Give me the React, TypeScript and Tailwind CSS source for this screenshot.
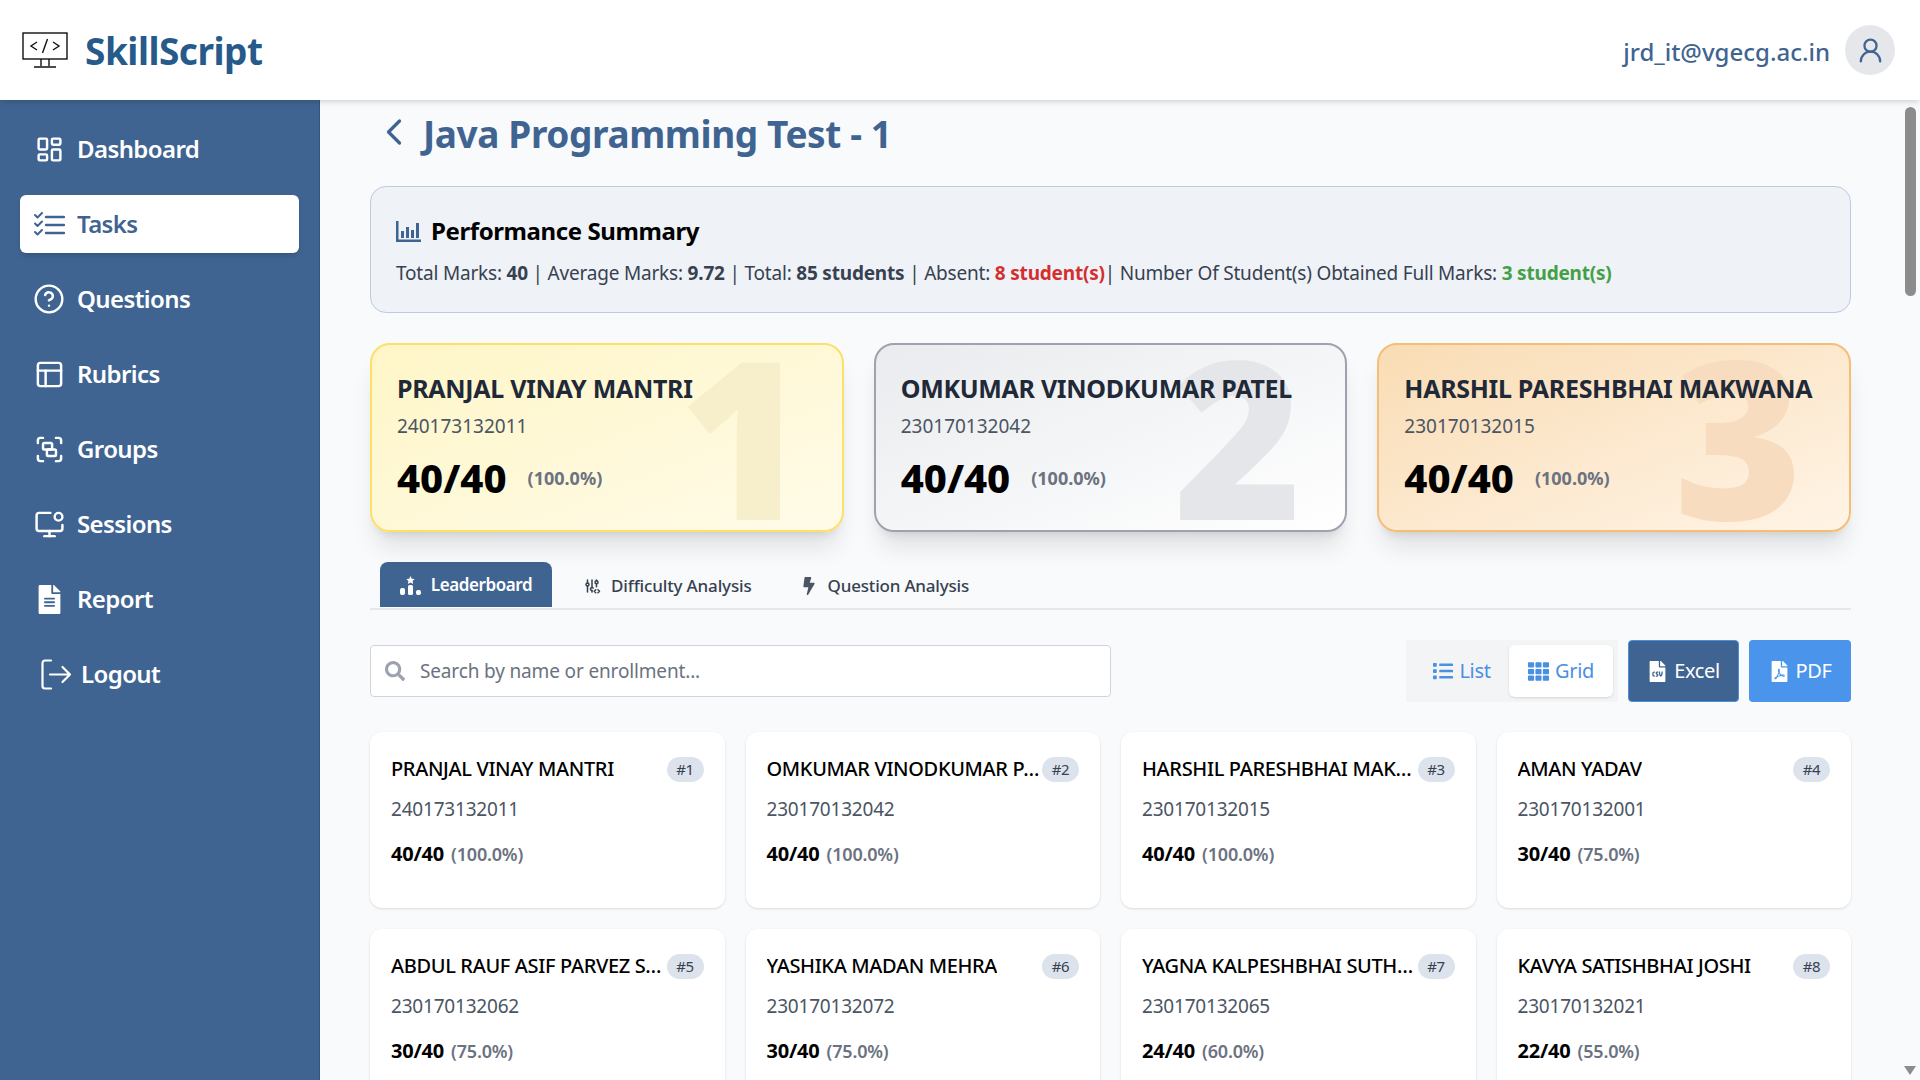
import {
  ChevronLeft,
  CircleHelp,
  Group,
  LayoutDashboard,
  MonitorDot,
  PanelsTopLeft,
  UserRound,
} from 'lucide-react';
import { FaBolt, FaFileAlt, FaFileCsv, FaFilePdf, FaList, FaSearch, FaTh } from 'react-icons/fa';
import { TbAdjustmentsCode } from 'react-icons/tb';

const font = { fontFamily: '"Noto Sans", "Open Sans", sans-serif' };

function LogoIcon() {
  return (
    <svg width="46" height="37" viewBox="0 0 46 37" fill="none" stroke="#111" strokeWidth="1.2">
      <rect x="1" y="1" width="44" height="26" fill="#fff" strokeWidth="1.4" />
      <path d="M15 10l-6 4 6 4M31 10l6 4-6 4M25.5 7l-5 14" strokeWidth="1.4" />
      <path d="M19 27v7M27 27v7M12 35h22" strokeWidth="1.4" />
    </svg>
  );
}

function TasksIcon() {
  return (
    <svg width="31" height="24" viewBox="0 0 31 24" fill="none" stroke="#406491" strokeLinecap="round" strokeLinejoin="round">
      <path d="M1 3l2.500 2.500L8 1M1 11.500L3.500 14 8 9.500M1 20l2.500 2.500L8 18" strokeWidth="2" />
      <path d="M12 5h18M12 13h18M12 21h18" strokeWidth="2.400" />
    </svg>
  );
}

function LogoutIcon() {
  return (
    <svg width="32" height="31" viewBox="0 0 32 31" fill="none" stroke="#fff" strokeWidth="2.200" strokeLinecap="round" strokeLinejoin="round">
      <path d="M11 1.500H5a2.500 2.500 0 0 0-2.500 2.500v23A2.500 2.500 0 0 0 5 29.500h6" />
      <path d="M10 15.500h20M22.500 8l7.500 7.500-7.500 7.500" />
    </svg>
  );
}

function ChartIcon() {
  return (
    <svg width="25" height="21" viewBox="0 0 25 21" fill="#406491">
      <path d="M0 0h2.500v18.500H25V21H0z" />
      <path d="M5 10h3v7H5zM10 6h3v11h-3zM15 9h3v8h-3zM20 2h3v15h-3z" />
    </svg>
  );
}

function LeaderboardIcon() {
  return (
    <svg width="21" height="19" viewBox="0 0 21 19" fill="#fff">
      <path d="M10.500 0l1.300 2.700 2.900.4-2.100 2 .5 2.900-2.600-1.400L7.900 8l.5-2.900-2.100-2 2.900-.4z" />
      <rect x="8" y="9" width="5" height="10" rx="1.500" />
      <rect x="0" y="12" width="5" height="7" rx="2" />
      <rect x="16" y="14" width="5" height="5" rx="2" />
    </svg>
  );
}

const navItems = [
  { label: 'Dashboard', icon: <LayoutDashboard size={29} strokeWidth={2} /> },
  { label: 'Tasks', icon: <TasksIcon />, active: true },
  { label: 'Questions', icon: <CircleHelp size={34} strokeWidth={1.8} /> },
  { label: 'Rubrics', icon: <PanelsTopLeft size={31} strokeWidth={1.900} /> },
  { label: 'Groups', icon: <Group size={31} strokeWidth={1.900} /> },
  { label: 'Sessions', icon: <MonitorDot size={31} strokeWidth={1.900} /> },
  { label: 'Report', icon: <FaFileAlt size={29} /> },
];

const topThree = [
  {
    rank: 1,
    name: 'PRANJAL VINAY MANTRI',
    id: '240173132011',
    tone: 'border-[#fde068] from-[#fef6c7] to-[#fffbe8]',
    digit: 'text-[#f7eecb] right-[34px]',
  },
  {
    rank: 2,
    name: 'OMKUMAR VINODKUMAR PATEL',
    id: '230170132042',
    tone: 'border-[#9ca3af] from-[#e9ebee] to-[#ffffff]',
    digit: 'text-[#e4e6e9] right-[43px]',
  },
  {
    rank: 3,
    name: 'HARSHIL PARESHBHAI MAKWANA',
    id: '230170132015',
    tone: 'border-[#f6bd78] from-[#f9dcb4] to-[#fff4e6]',
    digit: 'text-[#f7dcc0] right-[46px]',
  },
];

const students = [
  { rank: 1, name: 'PRANJAL VINAY MANTRI', id: '240173132011', marks: '40/40', pct: '(100.0%)' },
  { rank: 2, name: 'OMKUMAR VINODKUMAR PATEL', id: '230170132042', marks: '40/40', pct: '(100.0%)' },
  { rank: 3, name: 'HARSHIL PARESHBHAI MAKWANA', id: '230170132015', marks: '40/40', pct: '(100.0%)' },
  { rank: 4, name: 'AMAN YADAV', id: '230170132001', marks: '30/40', pct: '(75.0%)' },
  { rank: 5, name: 'ABDUL RAUF ASIF PARVEZ SHAIKH', id: '230170132062', marks: '30/40', pct: '(75.0%)' },
  { rank: 6, name: 'YASHIKA MADAN MEHRA', id: '230170132072', marks: '30/40', pct: '(75.0%)' },
  { rank: 7, name: 'YAGNA KALPESHBHAI SUTHAR', id: '230170132065', marks: '24/40', pct: '(60.0%)' },
  { rank: 8, name: 'KAVYA SATISHBHAI JOSHI', id: '230170132021', marks: '22/40', pct: '(55.0%)' },
];

export default function App() {
  return (
    <div className="relative h-[1080px] w-[1920px] overflow-hidden bg-[#f9fafb] flex flex-col" style={font}>
      <header className="relative z-10 h-[100px] shrink-0 bg-white shadow-md flex items-center justify-between pl-[22px] pr-[25px]">
        <div className="flex items-center gap-[17px]">
          <LogoIcon />
          <span className="text-[37px] mt-[1px] font-bold text-[#265a8a] tracking-[-0.5px]">SkillScript</span>
        </div>
        <div className="flex items-center gap-[15px]">
          <span className="text-[24px] mt-[3px] font-medium text-[#406491]">jrd_it@vgecg.ac.in</span>
          <div className="w-[50px] h-[50px] rounded-full bg-[#e5e7eb] flex items-center justify-center text-[#406491]">
            <UserRound size={29} strokeWidth={1.900} />
          </div>
        </div>
      </header>

      <div className="flex flex-1 min-h-0">
        <aside className="w-[320px] shrink-0 bg-[#406491] border-r border-[#36557c] px-[20px] pt-[20px] flex flex-col gap-[17px]">
          {navItems.map((item) => (
            <div
              key={item.label}
              className={
                item.active
                  ? 'h-[58px] rounded-md bg-white text-[#406491] shadow-md flex items-center gap-[12px] pl-[13px]'
                  : 'h-[58px] text-white flex items-center gap-[12px] pl-[13px]'
              }
            >
              <span className="w-[32px] flex justify-center">{item.icon}</span>
              <span className="text-[24px] font-semibold tracking-[-0.6px]">{item.label}</span>
            </div>
          ))}
          <div className="h-[58px] text-white flex items-center gap-[9px] pl-[20px]">
            <LogoutIcon />
            <span className="text-[24px] font-semibold tracking-[-0.6px]">Logout</span>
          </div>
        </aside>

        <main className="flex-1 overflow-hidden pl-[50px] pr-[69px]">
          <div className="h-[70px] flex items-center gap-[7px] pl-[2px]">
            <ChevronLeft size={44} strokeWidth={1.800} className="text-[#406491] mb-[6px]" />
            <h1 className="mb-[2px] text-[37px] font-bold text-[#406491] tracking-[-0.4px]">Java Programming Test - 1</h1>
          </div>

          <section className="mt-[16px] h-[127px] rounded-2xl border border-[#bccbe0] bg-[#eff2f7] px-[25px] pt-[26px]">
            <div className="flex items-center gap-[10px]">
              <ChartIcon />
              <h2 className="text-[24px] font-bold text-black tracking-[-0.4px]">Performance Summary</h2>
            </div>
            <p className="mt-[10px] text-[19px] text-[#374151] tracking-[-0.2px]">
              Total Marks: <b>40</b> | Average Marks: <b>9.72</b> | Total: <b>85 students</b> | Absent:{' '}
              <b className="text-[#d32f2f]">8 student(s)</b>| Number Of Student(s) Obtained Full Marks:{' '}
              <b className="text-[#43a047]">3 student(s)</b>
            </p>
          </section>

          <section className="mt-[30px] grid grid-cols-3 gap-[30px]">
            {topThree.map((c) => (
              <div
                key={c.rank}
                className={`relative h-[189px] overflow-hidden rounded-[20px] border-2 bg-gradient-to-br shadow-xl ${c.tone}`}
              >
                <span className={`absolute top-[-20px] text-[220px] leading-none font-black ${c.digit}`}>
                  {c.rank}
                </span>
                <div className="relative pl-[25px] pt-[26px]">
                  <div className="text-[25px] leading-[34px] font-bold text-[#1f2937] tracking-[-0.3px] whitespace-nowrap">{c.name}</div>
                  <div className="mt-[7px] text-[19px] leading-[28px] text-[#4b5563]">{c.id}</div>
                  <div className="mt-[13px] flex items-center gap-[21px]">
                    <span className="text-[40px] leading-[50px] font-extrabold text-black">40/40</span>
                    <span className="text-[18px] font-bold text-[#6b7280]">(100.0%)</span>
                  </div>
                </div>
              </div>
            ))}
          </section>

          <nav className="mt-[30px] h-[48px] border-b-2 border-[#e5e7eb] flex pl-[10px]">
            <div className="h-[45px] w-[172px] pt-[1px] rounded-t-lg bg-[#406491] text-white flex items-center justify-center gap-[10px]">
              <LeaderboardIcon />
              <span className="text-[17px] font-semibold tracking-[-0.4px]">Leaderboard</span>
            </div>
            <div className="h-[47px] ml-[31px] flex items-center gap-[10px] text-[#374151]">
              <TbAdjustmentsCode size={18} />
              <span className="text-[17px] font-medium tracking-[-0.15px]">Difficulty Analysis</span>
            </div>
            <div className="h-[47px] ml-[48px] flex items-center gap-[10px] text-[#374151]">
              <FaBolt size={18} className="text-[#4b5563]" />
              <span className="text-[17px] font-medium tracking-[-0.2px]">Question Analysis</span>
            </div>
          </nav>

          <div className="mt-[30px] flex items-center justify-between">
            <div className="w-[741px] h-[52px] rounded bg-white border border-[#d1d5db] flex items-center gap-[15px] pl-[14px]">
              <FaSearch size={20} className="text-[#9ca3af]" />
              <span className="mt-[1px] text-[19px] tracking-[-0.15px] text-[#6b7280]">Search by name or enrollment...</span>
            </div>
            <div className="flex items-center">
              <div className="h-[62px] w-[212px] bg-[#f3f4f6] flex items-center pl-[5px]">
                <div className="h-[52px] w-[102px] flex items-center justify-center gap-[6px] text-[#4a90e2]">
                  <FaList size={20} />
                  <span className="text-[20px] tracking-[-0.3px]">List</span>
                </div>
                <div className="h-[52px] w-[104px] -ml-[4px] rounded-md bg-white shadow flex items-center justify-center gap-[6px] text-[#4a90e2]">
                  <FaTh size={21} />
                  <span className="text-[20px] tracking-[-0.3px]">Grid</span>
                </div>
              </div>
              <div className="ml-[10px] h-[62px] w-[111px] rounded bg-[#406491] border border-[#4a90e2] text-white flex items-center justify-center gap-[6px]">
                <FaFileCsv size={21} />
                <span className="text-[20px] tracking-[-0.4px]">Excel</span>
              </div>
              <div className="ml-[10px] h-[62px] w-[102px] rounded bg-[#4a94ec] text-white flex items-center justify-center gap-[6px]">
                <FaFilePdf size={21} />
                <span className="text-[20px] tracking-[-0.4px]">PDF</span>
              </div>
            </div>
          </div>

          <section className="mt-[30px] grid grid-cols-4 gap-[21px]">
            {students.map((s) => (
              <div key={s.rank} className="h-[176px] rounded-xl bg-white shadow px-[21px] pt-[23px]">
                <div className="flex items-center justify-between">
                  <span className="truncate text-[20px] leading-[28px] font-medium text-black tracking-[-0.35px]">{s.name}</span>
                  <span className="shrink-0 h-[25px] w-[37px] rounded-full bg-[#dde3ec] text-[#374151] text-[15px] flex items-center justify-center tracking-[-0.3px]">
                    #{s.rank}
                  </span>
                </div>
                <div className="mt-[12px] text-[19px] leading-[28px] text-[#4b5563] tracking-[-0.2px]">{s.id}</div>
                <div className="mt-[16px] flex items-baseline gap-[7px]">
                  <span className="text-[20px] font-bold text-black tracking-[-0.2px]">{s.marks}</span>
                  <span className="text-[18px] font-semibold text-[#6b7280] tracking-[-0.2px]">{s.pct}</span>
                </div>
              </div>
            ))}
          </section>
        </main>
      </div>

      <div className="absolute left-[1905px] top-[107px] h-[189px] w-[11px] rounded-full bg-[#8c8c8c]" />
      <div className="absolute left-[1904px] top-[1066px] w-0 h-0 border-l-[6px] border-r-[6px] border-t-[9px] border-l-transparent border-r-transparent border-t-[#8c8c8c]" />
    </div>
  );
}
